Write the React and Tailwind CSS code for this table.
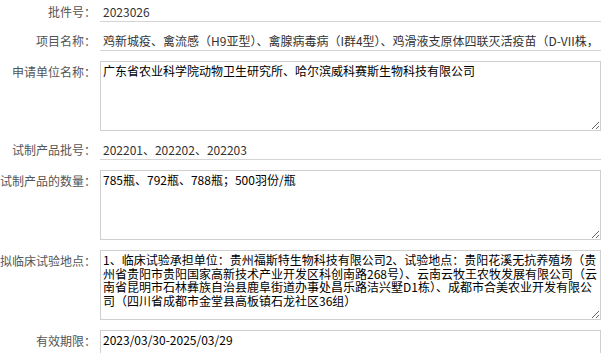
import React from "react";

const labelCls =
  "w-[96px] shrink-0 text-right text-[12px] leading-[14px] text-[#555] whitespace-nowrap";
const font = { fontFamily: '"Noto Sans CJK SC", "Noto Sans", sans-serif' };

function LineRow({ label, value, className = "" }) {
  return (
    <div className={"flex items-start " + className}>
      <div className={labelCls + " pt-[5px]"}>{label}</div>
      <input
        readOnly
        value={value}
        className="ml-[4px] w-[501px] h-[22px] border-0 border-b border-[#d4d4d4] bg-white px-[3px] pt-[1px] text-[12px] leading-[14px] text-[#333] outline-none"
        style={font}
      />
    </div>
  );
}

function AreaRow({ label, value, className = "" }) {
  return (
    <div className={"flex items-start " + className}>
      <div className={labelCls + " pt-[4px]"}>{label}</div>
      <textarea
        readOnly
        value={value}
        className="ml-[4px] w-[501px] h-[70px] border border-[#cfcfcf] bg-white px-[2px] py-[2px] text-[12px] leading-[13.5px] text-black outline-none resize"
        style={font}
      />
    </div>
  );
}

export default function App() {
  return (
    <div className="w-[615px] h-[353px] overflow-hidden bg-white" style={font}>
      <LineRow label="批件号：" value="2023026" />
      <LineRow
        className="mt-[7px]"
        label="项目名称："
        value="鸡新城疫、禽流感（H9亚型）、禽腺病毒病（I群4型）、鸡滑液支原体四联灭活疫苗（D-VII株，SZ株，HN株，FJ株）"
      />
      <AreaRow
        className="mt-[10px]"
        label="申请单位名称："
        value="广东省农业科学院动物卫生研究所、哈尔滨威科赛斯生物科技有限公司"
      />
      <LineRow
        className="mt-[7px]"
        label="试制产品批号："
        value="202201、202202、202203"
      />
      <AreaRow
        className="mt-[10px]"
        label="试制产品的数量："
        value="785瓶、792瓶、788瓶；500羽份/瓶"
      />
      <AreaRow
        className="mt-[10px]"
        label="拟临床试验地点："
        value="1、临床试验承担单位：贵州福斯特生物科技有限公司2、试验地点：贵阳花溪无抗养殖场（贵州省贵阳市贵阳国家高新技术产业开发区科创南路268号）、云南云牧王农牧发展有限公司（云南省昆明市石林彝族自治县鹿阜街道办事处昌乐路洁兴墅D1栋）、成都市合美农业开发有限公司（四川省成都市金堂县高板镇石龙社区36组）"
      />
      <AreaRow
        className="mt-[10px]"
        label="有效期限："
        value="2023/03/30-2025/03/29"
      />
    </div>
  );
}
